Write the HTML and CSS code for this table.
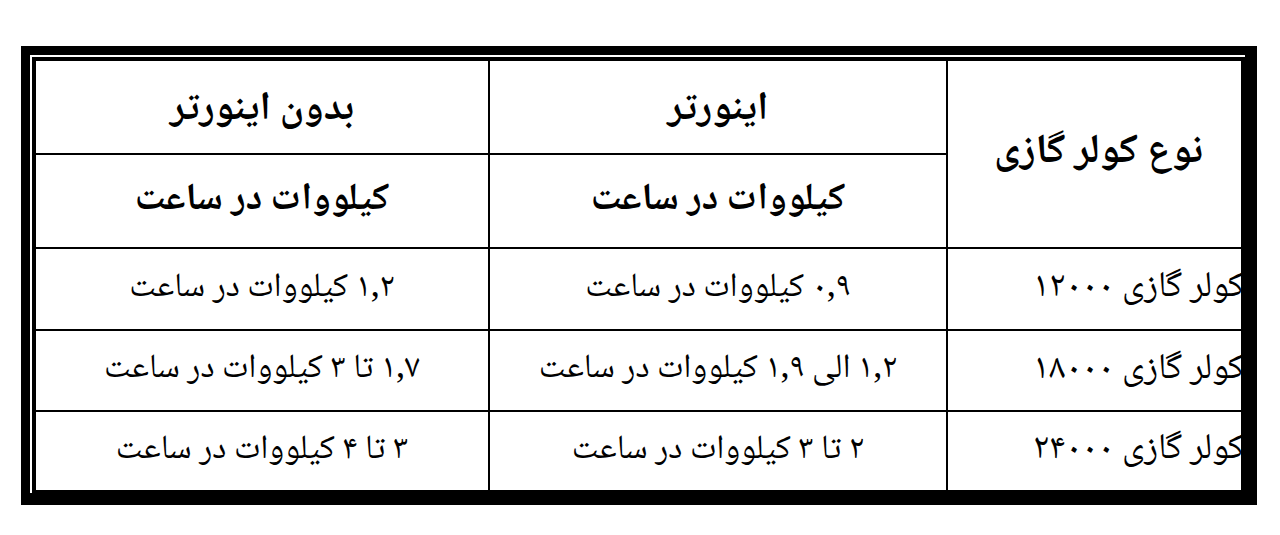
FILE: index.html
```html
<!DOCTYPE html>
<html lang="fa">
<head>
<meta charset="utf-8">
<title>مصرف برق کولر گازی</title>
<link rel="stylesheet" href="styles.css">
</head>
<body>
<div class="frame">
  <div class="table" dir="rtl">
    <div class="cell head type">نوع کولر گازی</div>
    <div class="cell head top">اینورتر</div>
    <div class="cell head top">بدون اینورتر</div>
    <div class="cell head">کیلووات در ساعت</div>
    <div class="cell head">کیلووات در ساعت</div>

    <div class="cell model"><span class="label">کولر گازی ۱۲۰۰۰</span></div>
    <div class="cell">۰,۹ کیلووات در ساعت</div>
    <div class="cell">۱,۲ کیلووات در ساعت</div>

    <div class="cell model"><span class="label">کولر گازی ۱۸۰۰۰</span></div>
    <div class="cell">۱,۲ الی ۱,۹ کیلووات در ساعت</div>
    <div class="cell">۱,۷ تا ۳ کیلووات در ساعت</div>

    <div class="cell model"><span class="label">کولر گازی ۲۴۰۰۰</span></div>
    <div class="cell">۲ تا ۳ کیلووات در ساعت</div>
    <div class="cell">۳ تا ۴ کیلووات در ساعت</div>
  </div>
</div>
</body>
</html>
```

FILE: styles.css
```css
html, body {
  margin: 0;
  padding: 0;
  background: #ffffff;
}

body {
  padding: 46px 0 0 21px;
  font-family: "Noto Naskh Arabic", "Noto Sans Arabic", "DejaVu Sans", sans-serif;
  color: #000;
}

.frame {
  display: inline-block;
  border-style: solid;
  border-color: #000;
  border-width: 9px 12px 12px 9px;
  padding: 2px 0 0 2px;
}

.table {
  display: grid;
  grid-template-columns: 293px 456px 452px;
  grid-template-rows: 92px 92px 80px 79px 78px;
  gap: 2px;
  background: #000;
  border-style: double;
  border-color: #000;
  border-width: 4px 4px 3px 4px;
}

.cell {
  background: #fff;
  display: flex;
  align-items: center;
  justify-content: center;
  font-size: 34px;
  line-height: 1.2;
  white-space: nowrap;
}

.head {
  font-weight: bold;
  font-size: 38px;
}

.head.top {
  font-size: 40px;
  padding-top: 6px;
}

.type {
  grid-row: span 2;
  font-size: 41px;
  padding-left: 8px;
}

.model {
  justify-content: flex-start;
  font-size: 36px;
}

.label {
  margin-right: -3px;
}
```
